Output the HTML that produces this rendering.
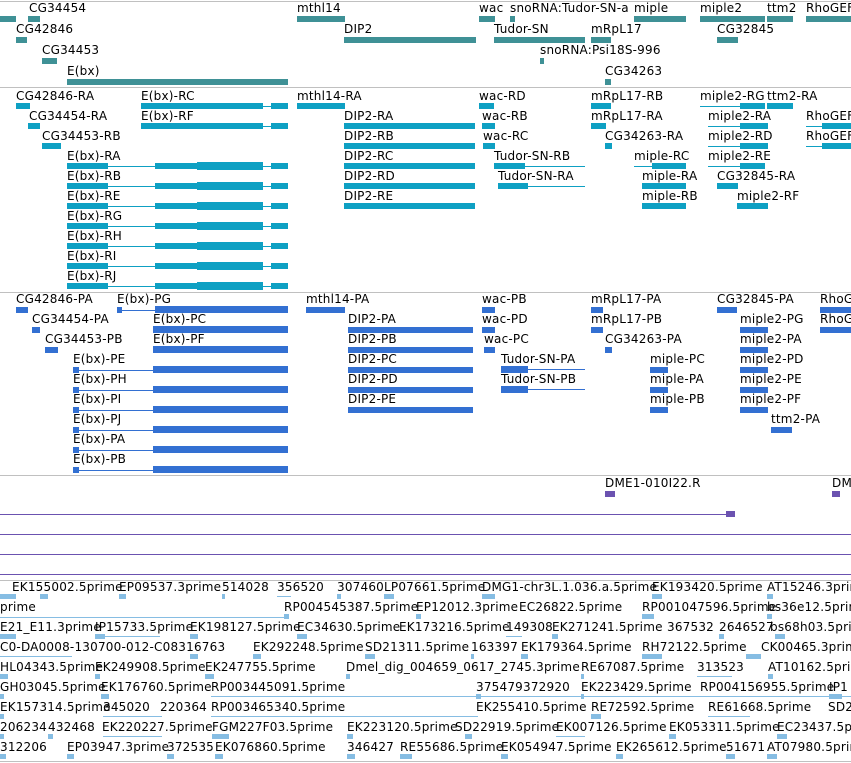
<!DOCTYPE html>
<html><head><meta charset="utf-8"><style>
body{margin:0;width:851px;height:763px;overflow:hidden;background:#fff;position:relative;font-family:"DejaVu Sans","Liberation Sans",sans-serif}
.l{position:absolute;font-size:12px;line-height:14px;white-space:nowrap;color:#000;letter-spacing:0.2px}
.b{position:absolute;display:block;height:6px}
.n{position:absolute;display:block;height:1px}
.h{position:absolute;left:0;width:851px;height:1px;background:#c0c0c0}
.t{background:#3f9196}.c{background:#0ea0c3}.p{background:#3370d2}.u{background:#6b52b0}.k{background:#86bde3}
</style></head><body>
<div class="h" style="top:1px"></div>
<div class="h" style="top:87px"></div>
<div class="h" style="top:292px"></div>
<div class="h" style="top:475px"></div>
<div class="h" style="top:580px"></div>
<div class="h" style="top:761px"></div>

<!-- genes -->
<i class="b t" style="left:0;top:16px;width:16px"></i>
<span class="l" style="left:29px;top:1px">CG34454</span><i class="b t" style="left:28px;top:16px;width:12px"></i>
<span class="l" style="left:297px;top:1px">mthl14</span><i class="b t" style="left:297px;top:16px;width:48px"></i>
<span class="l" style="left:479px;top:1px">wac</span><i class="b t" style="left:479px;top:16px;width:16px"></i>
<span class="l" style="left:510px;top:1px">snoRNA:Tudor-SN-a</span><i class="b t" style="left:510px;top:16px;width:5px"></i>
<span class="l" style="left:634px;top:1px">miple</span><i class="b t" style="left:634px;top:16px;width:52px"></i>
<span class="l" style="left:700px;top:1px">miple2</span><i class="b t" style="left:700px;top:16px;width:65px"></i>
<span class="l" style="left:767px;top:1px">ttm2</span><i class="b t" style="left:767px;top:16px;width:26px"></i>
<span class="l" style="left:806px;top:1px">RhoGEF</span><i class="b t" style="left:806px;top:16px;width:45px"></i>
<span class="l" style="left:16px;top:22px">CG42846</span><i class="b t" style="left:16px;top:37px;width:11px"></i>
<span class="l" style="left:344px;top:22px">DIP2</span><i class="b t" style="left:344px;top:37px;width:132px"></i>
<span class="l" style="left:494px;top:22px">Tudor-SN</span><i class="b t" style="left:494px;top:37px;width:91px"></i>
<span class="l" style="left:591px;top:22px">mRpL17</span><i class="b t" style="left:591px;top:37px;width:20px"></i>
<span class="l" style="left:717px;top:22px">CG32845</span><i class="b t" style="left:717px;top:37px;width:21px"></i>
<span class="l" style="left:42px;top:43px">CG34453</span><i class="b t" style="left:42px;top:58px;width:15px"></i>
<span class="l" style="left:540px;top:43px">snoRNA:Psi18S-996</span><i class="b t" style="left:540px;top:58px;width:4px"></i>
<span class="l" style="left:67px;top:64px">E(bx)</span><i class="b t" style="left:67px;top:79px;width:221px"></i>
<span class="l" style="left:605px;top:64px">CG34263</span><i class="b t" style="left:605px;top:79px;width:6px"></i>

<!-- transcripts -->
<span class="l" style="left:16px;top:89px">CG42846-RA</span><i class="b c" style="left:16px;top:103px;width:14px"></i>
<span class="l" style="left:141px;top:89px">E(bx)-RC</span><i class="b c" style="left:141px;top:103px;width:122px"></i><i class="n c" style="left:263px;top:106px;width:8px"></i><i class="b c" style="left:271px;top:103px;width:17px"></i>
<span class="l" style="left:297px;top:89px">mthl14-RA</span><i class="b c" style="left:297px;top:103px;width:48px"></i>
<span class="l" style="left:479px;top:89px">wac-RD</span><i class="b c" style="left:479px;top:103px;width:15px"></i>
<span class="l" style="left:591px;top:89px">mRpL17-RB</span><i class="b c" style="left:591px;top:103px;width:20px"></i>
<span class="l" style="left:700px;top:89px">miple2-RG</span><i class="n c" style="left:700px;top:106px;width:40px"></i><i class="b c" style="left:740px;top:103px;width:25px"></i>
<span class="l" style="left:767px;top:89px">ttm2-RA</span><i class="b c" style="left:767px;top:103px;width:26px"></i>

<span class="l" style="left:29px;top:109px">CG34454-RA</span><i class="b c" style="left:28px;top:123px;width:12px"></i>
<span class="l" style="left:141px;top:109px">E(bx)-RF</span><i class="b c" style="left:141px;top:123px;width:122px"></i><i class="n c" style="left:263px;top:126px;width:8px"></i><i class="b c" style="left:271px;top:123px;width:17px"></i>
<span class="l" style="left:344px;top:109px">DIP2-RA</span><i class="b c" style="left:344px;top:123px;width:131px"></i>
<span class="l" style="left:482px;top:109px">wac-RB</span><i class="b c" style="left:482px;top:123px;width:13px"></i>
<span class="l" style="left:591px;top:109px">mRpL17-RA</span><i class="b c" style="left:591px;top:123px;width:15px"></i>
<span class="l" style="left:708px;top:109px">miple2-RA</span><i class="n c" style="left:708px;top:126px;width:32px"></i><i class="b c" style="left:740px;top:123px;width:28px"></i>
<span class="l" style="left:806px;top:109px">RhoGEF</span><i class="n c" style="left:806px;top:126px;width:16px"></i><i class="b c" style="left:822px;top:123px;width:29px"></i>

<span class="l" style="left:42px;top:129px">CG34453-RB</span><i class="b c" style="left:42px;top:143px;width:19px"></i>
<span class="l" style="left:344px;top:129px">DIP2-RB</span><i class="b c" style="left:344px;top:143px;width:131px"></i>
<span class="l" style="left:483px;top:129px">wac-RC</span><i class="b c" style="left:483px;top:143px;width:12px"></i>
<span class="l" style="left:605px;top:129px">CG34263-RA</span><i class="b c" style="left:605px;top:143px;width:7px"></i>
<span class="l" style="left:708px;top:129px">miple2-RD</span><i class="n c" style="left:708px;top:146px;width:32px"></i><i class="b c" style="left:740px;top:143px;width:28px"></i>
<span class="l" style="left:806px;top:129px">RhoGEF</span><i class="n c" style="left:806px;top:146px;width:16px"></i><i class="b c" style="left:822px;top:143px;width:29px"></i>

<span class="l" style="left:344px;top:149px">DIP2-RC</span><i class="b c" style="left:344px;top:163px;width:131px"></i>
<span class="l" style="left:494px;top:149px">Tudor-SN-RB</span><i class="b c" style="left:494px;top:163px;width:31px"></i><i class="n c" style="left:525px;top:166px;width:60px"></i>
<span class="l" style="left:634px;top:149px">miple-RC</span><i class="n c" style="left:634px;top:166px;width:18px"></i><i class="b c" style="left:652px;top:163px;width:34px"></i>
<span class="l" style="left:708px;top:149px">miple2-RE</span><i class="n c" style="left:708px;top:166px;width:32px"></i><i class="b c" style="left:740px;top:163px;width:25px"></i>
<span class="l" style="left:344px;top:169px">DIP2-RD</span><i class="b c" style="left:344px;top:183px;width:131px"></i>
<span class="l" style="left:498px;top:169px">Tudor-SN-RA</span><i class="b c" style="left:498px;top:183px;width:30px"></i><i class="n c" style="left:528px;top:186px;width:57px"></i>
<span class="l" style="left:642px;top:169px">miple-RA</span><i class="b c" style="left:642px;top:183px;width:44px"></i>
<span class="l" style="left:717px;top:169px">CG32845-RA</span><i class="b c" style="left:717px;top:183px;width:21px"></i>
<span class="l" style="left:344px;top:189px">DIP2-RE</span><i class="b c" style="left:344px;top:203px;width:131px"></i>
<span class="l" style="left:642px;top:189px">miple-RB</span><i class="b c" style="left:642px;top:203px;width:44px"></i>
<span class="l" style="left:737px;top:189px">miple2-RF</span><i class="b c" style="left:737px;top:203px;width:31px"></i>

<!-- E(bx) transcripts -->
<span class="l" style="left:67px;top:149px">E(bx)-RA</span>
<span class="l" style="left:67px;top:169px">E(bx)-RB</span>
<span class="l" style="left:67px;top:189px">E(bx)-RE</span>
<span class="l" style="left:67px;top:209px">E(bx)-RG</span>
<span class="l" style="left:67px;top:229px">E(bx)-RH</span>
<span class="l" style="left:67px;top:249px">E(bx)-RI</span>
<span class="l" style="left:67px;top:269px">E(bx)-RJ</span>
<i class="b c" style="left:67px;top:163px;width:41px"></i><i class="n c" style="left:108px;top:166px;width:47px"></i><i class="b c" style="left:155px;top:163px;width:42px"></i><i class="b c" style="left:197px;top:162px;width:66px;height:8px"></i><i class="n c" style="left:263px;top:166px;width:8px"></i><i class="b c" style="left:271px;top:163px;width:17px"></i>
<i class="b c" style="left:67px;top:183px;width:41px"></i><i class="n c" style="left:108px;top:186px;width:47px"></i><i class="b c" style="left:155px;top:183px;width:42px"></i><i class="b c" style="left:197px;top:182px;width:66px;height:8px"></i><i class="n c" style="left:263px;top:186px;width:8px"></i><i class="b c" style="left:271px;top:183px;width:17px"></i>
<i class="b c" style="left:67px;top:203px;width:41px"></i><i class="n c" style="left:108px;top:206px;width:47px"></i><i class="b c" style="left:155px;top:203px;width:42px"></i><i class="b c" style="left:197px;top:202px;width:66px;height:8px"></i><i class="n c" style="left:263px;top:206px;width:8px"></i><i class="b c" style="left:271px;top:203px;width:17px"></i>
<i class="b c" style="left:67px;top:223px;width:41px"></i><i class="n c" style="left:108px;top:226px;width:47px"></i><i class="b c" style="left:155px;top:223px;width:42px"></i><i class="b c" style="left:197px;top:222px;width:66px;height:8px"></i><i class="n c" style="left:263px;top:226px;width:8px"></i><i class="b c" style="left:271px;top:223px;width:17px"></i>
<i class="b c" style="left:67px;top:243px;width:41px"></i><i class="n c" style="left:108px;top:246px;width:47px"></i><i class="b c" style="left:155px;top:243px;width:42px"></i><i class="b c" style="left:197px;top:242px;width:66px;height:8px"></i><i class="n c" style="left:263px;top:246px;width:8px"></i><i class="b c" style="left:271px;top:243px;width:17px"></i>
<i class="b c" style="left:67px;top:263px;width:41px"></i><i class="n c" style="left:108px;top:266px;width:47px"></i><i class="b c" style="left:155px;top:263px;width:42px"></i><i class="b c" style="left:197px;top:262px;width:66px;height:8px"></i><i class="n c" style="left:263px;top:266px;width:8px"></i><i class="b c" style="left:271px;top:263px;width:17px"></i>
<i class="b c" style="left:67px;top:283px;width:41px"></i><i class="n c" style="left:108px;top:286px;width:47px"></i><i class="b c" style="left:155px;top:283px;width:42px"></i><i class="b c" style="left:197px;top:282px;width:66px;height:8px"></i><i class="n c" style="left:263px;top:286px;width:8px"></i><i class="b c" style="left:271px;top:283px;width:17px"></i>

<!-- proteins -->
<span class="l" style="left:16px;top:292px">CG42846-PA</span><i class="b p" style="left:16px;top:307px;width:12px"></i>
<span class="l" style="left:117px;top:292px">E(bx)-PG</span><i class="b p" style="left:117px;top:307px;width:5px"></i><i class="n p" style="left:122px;top:310px;width:33px"></i><i class="b p" style="left:155px;top:306px;width:133px;height:7px"></i>
<span class="l" style="left:306px;top:292px">mthl14-PA</span><i class="b p" style="left:306px;top:307px;width:39px"></i>
<span class="l" style="left:482px;top:292px">wac-PB</span><i class="b p" style="left:482px;top:307px;width:13px"></i>
<span class="l" style="left:591px;top:292px">mRpL17-PA</span><i class="b p" style="left:591px;top:307px;width:12px"></i>
<span class="l" style="left:717px;top:292px">CG32845-PA</span><i class="b p" style="left:717px;top:307px;width:20px"></i>
<span class="l" style="left:820px;top:292px">RhoG</span><i class="b p" style="left:820px;top:307px;width:31px"></i>

<span class="l" style="left:32px;top:312px">CG34454-PA</span><i class="b p" style="left:32px;top:327px;width:8px"></i>
<span class="l" style="left:153px;top:312px">E(bx)-PC</span><i class="b p" style="left:153px;top:326px;width:135px;height:7px"></i>
<span class="l" style="left:348px;top:312px">DIP2-PA</span><i class="b p" style="left:348px;top:327px;width:125px"></i>
<span class="l" style="left:482px;top:312px">wac-PD</span><i class="b p" style="left:482px;top:327px;width:13px"></i>
<span class="l" style="left:591px;top:312px">mRpL17-PB</span><i class="b p" style="left:591px;top:327px;width:12px"></i>
<span class="l" style="left:740px;top:312px">miple2-PG</span><i class="b p" style="left:740px;top:327px;width:28px"></i>
<span class="l" style="left:820px;top:312px">RhoG</span><i class="b p" style="left:820px;top:327px;width:31px"></i>

<span class="l" style="left:45px;top:332px">CG34453-PB</span><i class="b p" style="left:45px;top:347px;width:13px"></i>
<span class="l" style="left:153px;top:332px">E(bx)-PF</span><i class="b p" style="left:153px;top:346px;width:135px;height:7px"></i>
<span class="l" style="left:348px;top:332px">DIP2-PB</span><i class="b p" style="left:348px;top:347px;width:125px"></i>
<span class="l" style="left:484px;top:332px">wac-PC</span><i class="b p" style="left:484px;top:347px;width:11px"></i>
<span class="l" style="left:605px;top:332px">CG34263-PA</span><i class="b p" style="left:605px;top:347px;width:7px"></i>
<span class="l" style="left:740px;top:332px">miple2-PA</span><i class="b p" style="left:740px;top:347px;width:28px"></i>

<span class="l" style="left:348px;top:352px">DIP2-PC</span><i class="b p" style="left:348px;top:367px;width:125px"></i>
<span class="l" style="left:501px;top:352px">Tudor-SN-PA</span><i class="b p" style="left:501px;top:366px;width:27px;height:7px"></i><i class="n p" style="left:528px;top:369px;width:57px"></i>
<span class="l" style="left:650px;top:352px">miple-PC</span><i class="b p" style="left:650px;top:367px;width:18px"></i>
<span class="l" style="left:740px;top:352px">miple2-PD</span><i class="b p" style="left:740px;top:367px;width:28px"></i>
<span class="l" style="left:348px;top:372px">DIP2-PD</span><i class="b p" style="left:348px;top:387px;width:125px"></i>
<span class="l" style="left:501px;top:372px">Tudor-SN-PB</span><i class="b p" style="left:501px;top:386px;width:27px;height:7px"></i><i class="n p" style="left:528px;top:389px;width:57px"></i>
<span class="l" style="left:650px;top:372px">miple-PA</span><i class="b p" style="left:650px;top:387px;width:18px"></i>
<span class="l" style="left:740px;top:372px">miple2-PE</span><i class="b p" style="left:740px;top:387px;width:28px"></i>
<span class="l" style="left:348px;top:392px">DIP2-PE</span><i class="b p" style="left:348px;top:407px;width:125px"></i>
<span class="l" style="left:650px;top:392px">miple-PB</span><i class="b p" style="left:650px;top:407px;width:18px"></i>
<span class="l" style="left:740px;top:392px">miple2-PF</span><i class="b p" style="left:740px;top:407px;width:28px"></i>
<span class="l" style="left:771px;top:412px">ttm2-PA</span><i class="b p" style="left:771px;top:427px;width:21px"></i>

<span class="l" style="left:73px;top:352px">E(bx)-PE</span>
<span class="l" style="left:73px;top:372px">E(bx)-PH</span>
<span class="l" style="left:73px;top:392px">E(bx)-PI</span>
<span class="l" style="left:73px;top:412px">E(bx)-PJ</span>
<span class="l" style="left:73px;top:432px">E(bx)-PA</span>
<span class="l" style="left:73px;top:452px">E(bx)-PB</span>
<i class="b p" style="left:73px;top:367px;width:6px"></i><i class="n p" style="left:79px;top:370px;width:74px"></i><i class="b p" style="left:153px;top:366px;width:135px;height:7px"></i>
<i class="b p" style="left:73px;top:387px;width:6px"></i><i class="n p" style="left:79px;top:390px;width:74px"></i><i class="b p" style="left:153px;top:386px;width:135px;height:7px"></i>
<i class="b p" style="left:73px;top:407px;width:6px"></i><i class="n p" style="left:79px;top:410px;width:74px"></i><i class="b p" style="left:153px;top:406px;width:135px;height:7px"></i>
<i class="b p" style="left:73px;top:427px;width:6px"></i><i class="n p" style="left:79px;top:430px;width:74px"></i><i class="b p" style="left:153px;top:426px;width:135px;height:7px"></i>
<i class="b p" style="left:73px;top:447px;width:6px"></i><i class="n p" style="left:79px;top:450px;width:74px"></i><i class="b p" style="left:153px;top:446px;width:135px;height:7px"></i>
<i class="b p" style="left:73px;top:467px;width:6px"></i><i class="n p" style="left:79px;top:470px;width:74px"></i><i class="b p" style="left:153px;top:466px;width:135px;height:7px"></i>

<!-- purple -->
<span class="l" style="left:605px;top:476px">DME1-010I22.R</span><i class="b u" style="left:605px;top:491px;width:10px"></i>
<span class="l" style="left:832px;top:476px">DM</span><i class="b u" style="left:832px;top:491px;width:8px"></i>
<i class="n u" style="left:0;top:514px;width:730px"></i><i class="b u" style="left:726px;top:511px;width:9px"></i>
<i class="n u" style="left:0;top:534px;width:851px"></i>
<i class="n u" style="left:0;top:554px;width:851px"></i>
<i class="n u" style="left:0;top:574px;width:851px"></i>

<!-- ESTs -->
<span class="l" style="left:12px;top:580px">EK155002.5prime</span>
<span class="l" style="left:119px;top:580px">EP09537.3prime</span>
<span class="l" style="left:222px;top:580px">514028</span>
<span class="l" style="left:277px;top:580px">356520</span>
<span class="l" style="left:337px;top:580px">307460</span>
<span class="l" style="left:384px;top:580px">LP07661.5prime</span>
<span class="l" style="left:482px;top:580px">DMG1-chr3L.1.036.a.5prime</span>
<span class="l" style="left:652px;top:580px">EK193420.5prime</span>
<span class="l" style="left:767px;top:580px">AT15246.3prime</span>

<span class="l" style="left:0;top:600px">prime</span>
<span class="l" style="left:284px;top:600px">RP004545387.5prime</span>
<span class="l" style="left:416px;top:600px">EP12012.3prime</span>
<span class="l" style="left:519px;top:600px">EC26822.5prime</span>
<span class="l" style="left:642px;top:600px">RP001047596.5prime</span>
<span class="l" style="left:767px;top:600px">bs36e12.5prime</span>

<span class="l" style="left:0;top:620px">E21_E11.3prime</span>
<span class="l" style="left:95px;top:620px">IP15733.5prime</span>
<span class="l" style="left:190px;top:620px">EK198127.5prime</span>
<span class="l" style="left:297px;top:620px">EC34630.5prime</span>
<span class="l" style="left:399px;top:620px">EK173216.5prime</span>
<span class="l" style="left:506px;top:620px">149308</span>
<span class="l" style="left:552px;top:620px">EK271241.5prime</span>
<span class="l" style="left:667px;top:620px">367532</span>
<span class="l" style="left:719px;top:620px">2646527</span>
<span class="l" style="left:770px;top:620px">bs68h03.5prime</span>

<span class="l" style="left:0;top:640px">C0-DA0008-130700-012-C08316763</span>
<span class="l" style="left:253px;top:640px">EK292248.5prime</span>
<span class="l" style="left:365px;top:640px">SD21311.5prime</span>
<span class="l" style="left:471px;top:640px">163397</span>
<span class="l" style="left:521px;top:640px">EK179364.5prime</span>
<span class="l" style="left:642px;top:640px">RH72122.5prime</span>
<span class="l" style="left:761px;top:640px">CK00465.3prime</span>

<span class="l" style="left:0;top:660px">HL04343.5prime</span>
<span class="l" style="left:95px;top:660px">EK249908.5prime</span>
<span class="l" style="left:205px;top:660px">EK247755.5prime</span>
<span class="l" style="left:346px;top:660px">Dmel_dig_004659_0617_2745.3prime</span>
<span class="l" style="left:581px;top:660px">RE67087.5prime</span>
<span class="l" style="left:697px;top:660px">313523</span>
<span class="l" style="left:768px;top:660px">AT10162.5prime</span>

<span class="l" style="left:0;top:680px">GH03045.5prime</span>
<span class="l" style="left:101px;top:680px">EK176760.5prime</span>
<span class="l" style="left:211px;top:680px">RP003445091.5prime</span>
<span class="l" style="left:476px;top:680px">375479372920</span>
<span class="l" style="left:581px;top:680px">EK223429.5prime</span>
<span class="l" style="left:700px;top:680px">RP004156955.5prime</span>
<span class="l" style="left:829px;top:680px">IP1</span>

<span class="l" style="left:0;top:700px">EK157314.5prime</span>
<span class="l" style="left:103px;top:700px">345020</span>
<span class="l" style="left:160px;top:700px">220364</span>
<span class="l" style="left:211px;top:700px">RP003465340.5prime</span>
<span class="l" style="left:476px;top:700px">EK255410.5prime</span>
<span class="l" style="left:591px;top:700px">RE72592.5prime</span>
<span class="l" style="left:708px;top:700px">RE61668.5prime</span>
<span class="l" style="left:828px;top:700px">SD2</span>

<span class="l" style="left:0;top:720px">206234</span>
<span class="l" style="left:48px;top:720px">432468</span>
<span class="l" style="left:102px;top:720px">EK220227.5prime</span>
<span class="l" style="left:212px;top:720px">FGM227F03.5prime</span>
<span class="l" style="left:347px;top:720px">EK223120.5prime</span>
<span class="l" style="left:455px;top:720px">SD22919.5prime</span>
<span class="l" style="left:556px;top:720px">EK007126.5prime</span>
<span class="l" style="left:669px;top:720px">EK053311.5prime</span>
<span class="l" style="left:777px;top:720px">EC23437.5prime</span>

<span class="l" style="left:0;top:740px">312206</span>
<span class="l" style="left:67px;top:740px">EP03947.3prime</span>
<span class="l" style="left:167px;top:740px">372535</span>
<span class="l" style="left:215px;top:740px">EK076860.5prime</span>
<span class="l" style="left:347px;top:740px">346427</span>
<span class="l" style="left:400px;top:740px">RE55686.5prime</span>
<span class="l" style="left:501px;top:740px">EK054947.5prime</span>
<span class="l" style="left:616px;top:740px">EK265612.5prime</span>
<span class="l" style="left:726px;top:740px">51671</span>
<span class="l" style="left:767px;top:740px">AT07980.5prime</span>

<!-- EST glyphs -->
<i class="b k" style="left:0;top:594px;width:16px;height:5px"></i><i class="b k" style="left:40px;top:594px;width:8px;height:5px"></i><i class="b k" style="left:119px;top:594px;width:7px;height:5px"></i><i class="b k" style="left:222px;top:594px;width:3px;height:5px"></i><i class="n k" style="left:277px;top:596px;width:14px"></i><i class="b k" style="left:337px;top:594px;width:4px;height:5px"></i><i class="b k" style="left:384px;top:594px;width:10px;height:5px"></i><i class="b k" style="left:482px;top:594px;width:13px;height:5px"></i><i class="b k" style="left:652px;top:594px;width:10px;height:5px"></i><i class="b k" style="left:767px;top:594px;width:6px;height:5px"></i>
<i class="n k" style="left:0;top:617px;width:288px"></i><i class="b k" style="left:284px;top:614px;width:5px;height:5px"></i><i class="b k" style="left:416px;top:614px;width:5px;height:5px"></i><i class="b k" style="left:642px;top:614px;width:12px;height:5px"></i><i class="b k" style="left:767px;top:614px;width:5px;height:5px"></i>
<i class="b k" style="left:0;top:634px;width:16px;height:5px"></i><i class="b k" style="left:95px;top:634px;width:10px;height:5px"></i><i class="n k" style="left:105px;top:636px;width:55px"></i><i class="b k" style="left:190px;top:634px;width:8px;height:5px"></i><i class="b k" style="left:297px;top:634px;width:10px;height:5px"></i><i class="n k" style="left:506px;top:636px;width:16px"></i><i class="b k" style="left:552px;top:634px;width:6px;height:5px"></i><i class="b k" style="left:719px;top:634px;width:5px;height:5px"></i><i class="b k" style="left:775px;top:634px;width:10px;height:5px"></i>
<i class="n k" style="left:0;top:656px;width:72px"></i><i class="b k" style="left:190px;top:654px;width:8px;height:5px"></i><i class="b k" style="left:253px;top:654px;width:8px;height:5px"></i><i class="b k" style="left:365px;top:654px;width:10px;height:5px"></i><i class="b k" style="left:471px;top:654px;width:3px;height:5px"></i><i class="b k" style="left:521px;top:654px;width:7px;height:5px"></i><i class="b k" style="left:642px;top:654px;width:20px;height:5px"></i><i class="b k" style="left:746px;top:654px;width:15px;height:5px"></i>
<i class="b k" style="left:0;top:674px;width:8px;height:5px"></i><i class="b k" style="left:95px;top:674px;width:5px;height:5px"></i><i class="b k" style="left:205px;top:674px;width:9px;height:5px"></i><i class="b k" style="left:346px;top:674px;width:4px;height:5px"></i><i class="b k" style="left:581px;top:674px;width:3px;height:5px"></i><i class="n k" style="left:697px;top:676px;width:35px"></i><i class="b k" style="left:768px;top:674px;width:5px;height:5px"></i>
<i class="b k" style="left:0;top:694px;width:4px;height:5px"></i><i class="b k" style="left:101px;top:694px;width:8px;height:5px"></i><i class="n k" style="left:211px;top:696px;width:640px"></i><i class="b k" style="left:476px;top:694px;width:5px;height:5px"></i><i class="b k" style="left:581px;top:694px;width:3px;height:5px"></i><i class="n k" style="left:700px;top:696px;width:45px"></i><i class="b k" style="left:829px;top:694px;width:13px;height:5px"></i>
<i class="b k" style="left:0;top:714px;width:4px;height:5px"></i><i class="n k" style="left:103px;top:716px;width:59px"></i><i class="n k" style="left:211px;top:716px;width:267px"></i><i class="b k" style="left:591px;top:714px;width:10px;height:5px"></i><i class="n k" style="left:708px;top:716px;width:42px"></i>
<i class="b k" style="left:0;top:734px;width:4px;height:5px"></i><i class="b k" style="left:48px;top:734px;width:5px;height:5px"></i><i class="n k" style="left:103px;top:736px;width:59px"></i><i class="b k" style="left:212px;top:734px;width:17px;height:5px"></i><i class="b k" style="left:347px;top:734px;width:6px;height:5px"></i><i class="b k" style="left:465px;top:734px;width:7px;height:5px"></i><i class="n k" style="left:556px;top:736px;width:29px"></i><i class="b k" style="left:669px;top:734px;width:7px;height:5px"></i><i class="b k" style="left:777px;top:734px;width:10px;height:5px"></i>
<i class="b k" style="left:0;top:754px;width:6px;height:5px"></i><i class="b k" style="left:67px;top:754px;width:7px;height:5px"></i><i class="b k" style="left:167px;top:754px;width:7px;height:5px"></i><i class="b k" style="left:215px;top:754px;width:8px;height:5px"></i><i class="b k" style="left:347px;top:754px;width:8px;height:5px"></i><i class="b k" style="left:400px;top:754px;width:12px;height:5px"></i><i class="b k" style="left:501px;top:754px;width:7px;height:5px"></i><i class="b k" style="left:616px;top:754px;width:7px;height:5px"></i><i class="b k" style="left:726px;top:754px;width:9px;height:5px"></i><i class="b k" style="left:767px;top:754px;width:10px;height:5px"></i>
</body></html>
